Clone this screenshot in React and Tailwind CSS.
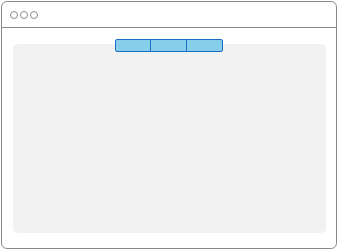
export default function App() {
  return (
    <div className="w-[338px] h-[250px] bg-white p-px">
      <div className="w-[336px] h-[248px] border border-[#8a8a8a] rounded-[6px] flex flex-col bg-white">
        {/* Title bar */}
        <div className="h-[26px] border-b border-[#8a8a8a] flex items-center gap-[2px] pl-[8px] shrink-0">
          <span className="w-[8px] h-[8px] rounded-full border border-[#8a8a8a]" />
          <span className="w-[8px] h-[8px] rounded-full border border-[#8a8a8a]" />
          <span className="w-[8px] h-[8px] rounded-full border border-[#8a8a8a]" />
        </div>

        {/* Content */}
        <div className="flex-1 pt-[16px] pl-[11px] pr-[10px] pb-[15px]">
          <div className="relative w-full h-full bg-[#f2f2f2] rounded-[5px]">
            <div className="absolute left-[102px] top-[-5px] flex h-[13px] w-[108px] border border-[#1a6fc4] rounded-[2px] bg-[#87ceeb]">
              <div className="w-[35px] border-r border-[#1a6fc4]" />
              <div className="w-[36px] border-r border-[#1a6fc4]" />
              <div className="flex-1" />
            </div>
          </div>
        </div>
      </div>
    </div>
  )
}
